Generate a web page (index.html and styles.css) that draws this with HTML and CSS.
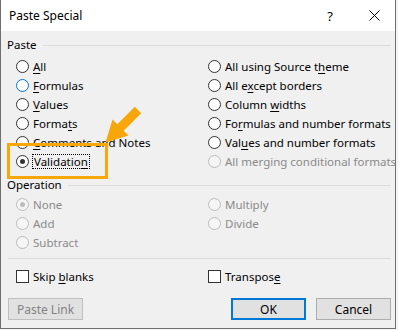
FILE: index.html
```html
<!DOCTYPE html>
<html lang="en">
<head>
    <meta charset="UTF-8">
    <title>Paste Special</title>
    <link rel="stylesheet" href="styles.css">
</head>
<body>
    <div class="dialog">
        <div class="titlebar">
            <span class="title">Paste Special</span>
            <span class="help">?</span>
            <span class="close">
                <svg width="11" height="11" viewBox="0 0 11 11"><path d="M0.5 0.5 L10.5 10.5 M10.5 0.5 L0.5 10.5" stroke="#000" stroke-width="1" fill="none"/></svg>
            </span>
        </div>

        <div class="content">
            <div class="group-label"><span>Paste</span></div>
            <div class="options">
                <label class="opt"><span class="radio"></span><span><u>A</u>ll</span></label>
                <label class="opt"><span class="radio"></span><span>All using Source t<u>h</u>eme</span></label>
                <label class="opt"><span class="radio hover"></span><span><u>F</u>ormulas</span></label>
                <label class="opt"><span class="radio"></span><span>All e<u>x</u>cept borders</span></label>
                <label class="opt"><span class="radio"></span><span><u>V</u>alues</span></label>
                <label class="opt"><span class="radio"></span><span>Column <u>w</u>idths</span></label>
                <label class="opt"><span class="radio"></span><span>Forma<u>t</u>s</span></label>
                <label class="opt"><span class="radio"></span><span>Fo<u>r</u>mulas and number formats</span></label>
                <label class="opt"><span class="radio"></span><span><u>C</u>omments and Notes</span></label>
                <label class="opt"><span class="radio"></span><span>Val<u>u</u>es and number formats</span></label>
                <label class="opt"><span class="radio checked"></span><span class="focus">Validatio<u>n</u></span></label>
                <label class="opt disabled"><span class="radio"></span><span>All merging conditional formats</span></label>
            </div>

            <div class="group-label op-label"><span>Operation</span></div>
            <div class="options ops">
                <label class="opt disabled"><span class="radio checked"></span><span>None</span></label>
                <label class="opt disabled"><span class="radio"></span><span>Multiply</span></label>
                <label class="opt disabled"><span class="radio"></span><span>Add</span></label>
                <label class="opt disabled"><span class="radio"></span><span>Divide</span></label>
                <label class="opt disabled"><span class="radio"></span><span>Subtract</span></label>
            </div>

            <div class="sep"></div>

            <div class="options checks">
                <label class="opt"><span class="check"></span><span>Skip <u>b</u>lanks</span></label>
                <label class="opt"><span class="check"></span><span>Transpos<u>e</u></span></label>
            </div>

            <div class="buttons">
                <button class="btn" disabled>Paste Link</button>
                <span class="spacer"></span>
                <button class="btn default">OK</button>
                <button class="btn">Cancel</button>
            </div>
        </div>

        <div class="highlight"></div>
        <svg class="arrow" width="396" height="329" viewBox="0 0 396 329">
            <polygon points="134.8,106.8 141.2,113.2 123.7,130.7 128.5,135.5 105.5,142.5 112.5,119.5 117.3,124.3" fill="#f7a70a"/>
        </svg>
    </div>
</body>
</html>
```

FILE: styles.css
```css
* {
    box-sizing: border-box;
}

body {
    margin: 0;
    background: #f4f4f4;
    font-family: 'Segoe UI', 'Noto Sans', sans-serif;
    font-size: 11.5px;
    color: #000;
}

.dialog {
    position: relative;
    width: 396px;
    height: 329px;
    background: #f0f0f0;
    border: 1px solid #6f6f6f;
    border-top: none;
}

.titlebar {
    height: 31px;
    background: #fff;
    display: flex;
    align-items: center;
    padding-left: 8px;
}

.title {
    flex: 1;
    font-size: 12px;
}

.help {
    width: 14px;
    text-align: center;
    margin-right: 32px;
    font-size: 13px;
}

.close {
    display: flex;
    margin-right: 15px;
}

.content {
    padding: 7px 4px 0 6px;
}

.group-label {
    display: flex;
    align-items: center;
    height: 14px;
    line-height: 14px;
}

.group-label::after {
    content: "";
    flex: 1;
    height: 1px;
    background: #dcdcdc;
    margin-left: 6px;
}

.op-label {
    margin-top: 7px;
}

.options {
    display: grid;
    grid-template-columns: 192px 1fr;
    padding-left: 9px;
    margin-top: 5px;
}

.ops {
    margin-top: 3px;
}

.opt {
    display: flex;
    align-items: center;
    height: 19px;
    gap: 4px;
    white-space: nowrap;
}

.opt u {
    text-decoration-thickness: 1px;
    text-underline-offset: 2px;
}

.radio {
    position: relative;
    width: 13px;
    height: 13px;
    border-radius: 50%;
    border: 1px solid #333;
    background: #fff;
    flex: none;
}

.radio.hover {
    border-color: #0078d7;
}

.radio.checked::after {
    content: "";
    position: absolute;
    left: 3px;
    top: 3px;
    width: 5px;
    height: 5px;
    border-radius: 50%;
    background: #333;
}

.disabled {
    color: #8a8a8a;
}

.disabled .radio {
    border-color: #bcbcbc;
    background: #f5f5f5;
}

.disabled .radio.checked::after {
    background: #bcbcbc;
}

.focus {
    outline: 1px dotted #000;
    outline-offset: 0;
    padding: 0 1px;
    line-height: 13px;
}

.sep {
    height: 1px;
    background: #dcdcdc;
    margin: 6px 0 0 1px;
}

.checks {
    margin-top: 8px;
}

.check {
    width: 13px;
    height: 13px;
    border: 1px solid #333;
    background: #fff;
    flex: none;
}

.buttons {
    display: flex;
    gap: 10px;
    margin-top: 12px;
    padding-left: 1px;
}

.spacer {
    flex: 1;
}

.btn {
    width: 75px;
    height: 22px;
    background: #e1e1e1;
    border: 1px solid #adadad;
    font-family: inherit;
    font-size: 12px;
    color: #000;
    padding: 0;
}

.btn:disabled {
    color: #838383;
    border-color: #bfbfbf;
}

.btn.default {
    border: 2px solid #0078d7;
}

.highlight {
    position: absolute;
    left: 6px;
    top: 143px;
    width: 101px;
    height: 36px;
    border: 3px solid #f7a70a;
}

.arrow {
    position: absolute;
    left: -1px;
    top: 0;
    pointer-events: none;
}
```
